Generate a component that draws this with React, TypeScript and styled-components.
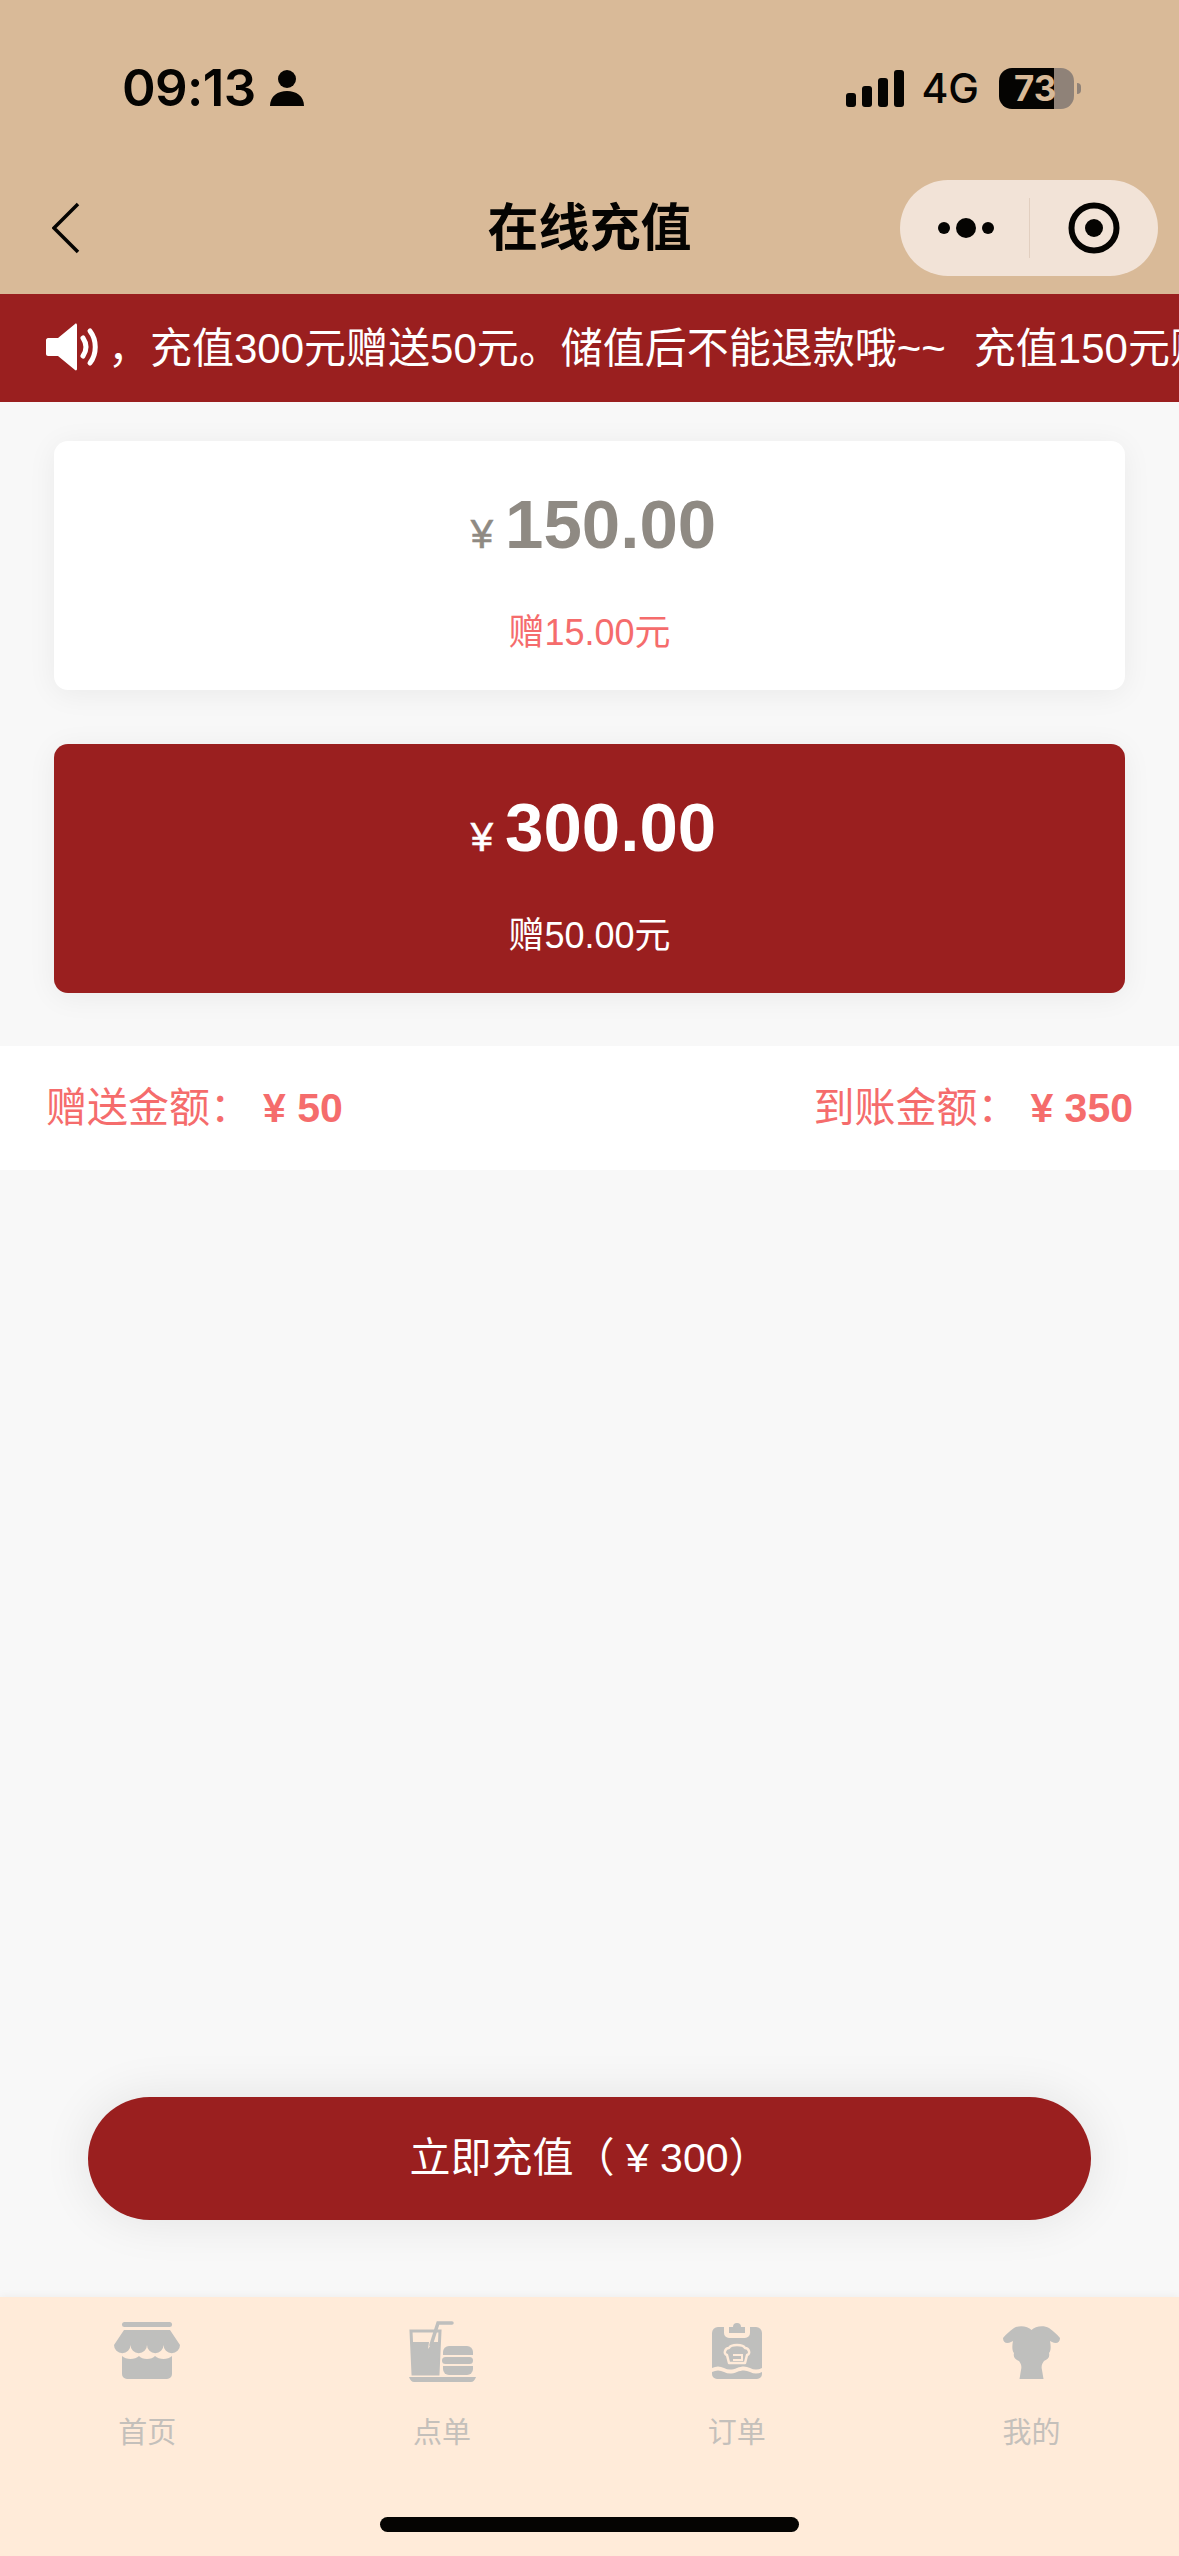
import styled, { createGlobalStyle } from "styled-components";

const GlobalStyle = createGlobalStyle`
  html, body {
    margin: 0;
    padding: 0;
    background: #f8f8f8;
    font-family: "Liberation Sans", "Noto Sans CJK SC", sans-serif;
  }
  * {
    box-sizing: border-box;
  }
`;

const Page = styled.div`
  width: 1179px;
  height: 2556px;
  display: flex;
  flex-direction: column;
  overflow: hidden;
  background: #f8f8f8;
`;

const Header = styled.header`
  background: #d9ba98;
  color: #050402;
`;

const StatusBar = styled.div`
  height: 180px;
  padding: 62px 98px 0 122px;
  display: flex;
  justify-content: space-between;
  align-items: flex-start;
`;

const StatusGroup = styled.div`
  display: flex;
  align-items: center;
  height: 52px;
`;

const Time = styled.span`
  font-family: Inter, sans-serif;
  font-size: 51px;
  font-weight: 600;
  letter-spacing: -0.6px;
  line-height: 52px;
`;

const PersonIcon = styled.svg`
  width: 34px;
  height: 36px;
  margin-left: 14px;
`;

const SignalIcon = styled.svg`
  width: 58px;
  height: 37px;
`;

const Network = styled.span`
  font-family: Inter, sans-serif;
  font-size: 41px;
  font-weight: 500;
  line-height: 52px;
  margin: 0 20px 0 17px;
`;

const BatteryWrap = styled.div`
  padding-right: 7px;
`;

const Battery = styled.div`
  position: relative;
  width: 75px;
  height: 41px;
  border-radius: 13px;
  background: linear-gradient(to right, #050402 0 55px, #8f8278 55px);
  display: flex;
  align-items: center;
  padding-left: 15px;
  font-family: Inter, sans-serif;
  font-size: 35px;
  font-weight: 700;
  color: #d9ba98;

  &::after {
    content: "";
    position: absolute;
    right: -7px;
    top: 15px;
    width: 4px;
    height: 11px;
    border-radius: 0 6px 6px 0;
    background: #8f8278;
  }
`;

const NavBar = styled.div`
  height: 114px;
  padding: 0 21px;
  display: grid;
  grid-template-columns: 1fr auto 1fr;
`;

const BackIcon = styled.svg`
  width: 28px;
  height: 52px;
  margin: 22px 0 0 31px;
`;

const Title = styled.h1`
  margin: 0;
  font-size: 51px;
  line-height: 98px;
  font-weight: 700;
`;

const Capsule = styled.div`
  justify-self: end;
  width: 258px;
  height: 96px;
  border-radius: 48px;
  background: #f2e3d7;
  display: flex;
  align-items: center;
`;

const CapsuleCell = styled.div`
  flex: 1;
  height: 60px;
  display: flex;
  align-items: center;
  justify-content: center;

  & + & {
    border-left: 1px solid #e2cfc0;
  }
`;

const Notice = styled.div`
  height: 108px;
  background: #9a1f1f;
  color: #fff;
  padding: 0 0 7px 46px;
  display: flex;
  align-items: center;
  white-space: nowrap;
  overflow: hidden;
  font-size: 42px;
`;

const SpeakerIcon = styled.svg`
  flex: none;
  width: 56px;
  height: 48px;
  margin: 5px 6px 0 0;
`;

const NoticeText = styled.span`
  flex: none;
  margin-right: 28px;
`;

const CardList = styled.div`
  padding: 39px 54px 53px;
  display: flex;
  flex-direction: column;
  gap: 54px;
`;

const Card = styled.div<{ $active?: boolean }>`
  height: 249px;
  border-radius: 14px;
  background: ${(p) => (p.$active ? "#9a1f1f" : "#fff")};
  color: ${(p) => (p.$active ? "#fff" : "#8f8a83")};
  box-shadow: 0 4px 30px rgba(0, 0, 0, 0.06);
  display: flex;
  flex-direction: column;
  align-items: center;
  padding-top: 45px;
`;

const Amount = styled.div`
  display: flex;
  align-items: baseline;
  padding-left: 8px;
  font-weight: 700;
  font-size: 69px;
  line-height: 78px;
`;

const Currency = styled.span`
  font-size: 40px;
  font-weight: 400;
  -webkit-text-stroke: 0.6px currentColor;
  margin-right: 12px;
`;

const Gift = styled.div<{ $active?: boolean }>`
  margin-top: 38px;
  font-size: 36px;
  line-height: 44px;
  color: ${(p) => (p.$active ? "#fff" : "#f56c6c")};
`;

const Summary = styled.div`
  height: 124px;
  background: #fff;
  padding: 0 46px 9px 46px;
  display: flex;
  justify-content: space-between;
  align-items: center;
  color: #f56c6c;
  font-size: 41px;
`;

const SummaryValue = styled.b`
  margin-left: 12px;
`;

const Spacer = styled.div`
  flex: 1;
`;

const PayButton = styled.button`
  display: block;
  flex: none;
  width: 1003px;
  height: 123px;
  margin: 0 88px 77px;
  padding: 0 0 10px;
  border: 0;
  border-radius: 62px;
  background: #9a1f1f;
  color: #fff;
  font-family: inherit;
  font-size: 41px;
  box-shadow: 0 0 50px rgba(0, 0, 0, 0.09);
`;

const TabBar = styled.nav`
  position: relative;
  flex: none;
  height: 259px;
  background: #ffebd9;
  box-shadow: 0 -2px 8px rgba(0, 0, 0, 0.04);
  display: grid;
  grid-template-columns: repeat(4, 1fr);
`;

const Tab = styled.div`
  display: flex;
  flex-direction: column;
  align-items: center;
  color: #c4c0bb;
  font-size: 29px;
`;

const TabIconBox = styled.div`
  height: 63px;
  margin-top: 22px;
  display: flex;
  align-items: flex-end;
`;

const TabLabel = styled.span`
  margin-top: 29px;
  line-height: 44px;
`;

const HomeBar = styled.div`
  position: absolute;
  left: 380px;
  bottom: 24px;
  width: 419px;
  height: 15px;
  border-radius: 8px;
  background: #050402;
`;

const ICON = "#bfbfbd";
const CUT = "#ffebd9";

const StoreIcon = () => (
  <svg width="66" height="57" viewBox="0 0 66 57" style={{ marginBottom: 3 }}>
    <rect x="8" y="0" width="50" height="5" rx="2.5" fill={ICON} />
    <path
      d="M10 8H56L66 23A8.25 8.25 0 0 1 49.5 23A8.25 8.25 0 0 1 33 23A8.25 8.25 0 0 1 16.5 23A8.25 8.25 0 0 1 0 23Z"
      fill={ICON}
    />
    <path
      d="M8 34C12 38 21 38 25 34C28 38 38 38 41 34C45 38 54 38 58 34V52a5 5 0 0 1-5 5H13a5 5 0 0 1-5-5Z"
      fill={ICON}
    />
  </svg>
);

const DrinkIcon = () => (
  <svg width="67" height="63" viewBox="0 0 67 63">
    <path d="M2 12H31L29 55H4Z" fill="none" stroke={ICON} strokeWidth="3" />
    <path d="M3 23H20L19 30L24 23H31L29 55H4Z" fill={ICON} />
    <path d="M22 26L29 4H43" fill="none" stroke={ICON} strokeWidth="3.5" strokeLinecap="round" />
    <path d="M34 36v-3a6 6 0 0 1 6-6h18a6 6 0 0 1 6 6v3Z" fill={ICON} />
    <rect x="33" y="38" width="31" height="7" rx="3.5" fill={ICON} />
    <path d="M34 47H64v3a6 6 0 0 1-6 6H40a6 6 0 0 1-6-6Z" fill={ICON} />
    <path d="M0 58H67C66 61 64 63 62 63H5C3 63 1 61 0 58Z" fill={ICON} />
  </svg>
);

const OrderIcon = () => (
  <svg width="50" height="57" viewBox="0 0 50 57" style={{ marginBottom: 3 }}>
    <path
      d="M12 5H6a6 6 0 0 0-6 6V46C4 44 8 44 12 46C16 48 20 48 25 46C30 44 34 44 38 46C42 48 46 48 50 46V11a6 6 0 0 0-6-6H38V11a5 5 0 0 1-5 5H17a5 5 0 0 1-5-5Z"
      fill={ICON}
    />
    <path d="M17 11V5h4a4 4 0 0 1 8 0h4v6Z" fill={ICON} />
    <path d="M0 50C4 48 8 48 12 50C16 52 20 52 25 50C30 48 34 48 38 50C42 52 46 52 50 50V52a5 5 0 0 1-5 5H5a5 5 0 0 1-5-5Z" fill={ICON} />
    <path
      d="M17 41L15 33C11 32 13 26 17 26C19 22 31 22 33 26C37 26 39 32 35 33L33 41Z"
      fill="none"
      stroke={CUT}
      strokeWidth="2.5"
      strokeLinejoin="round"
    />
    <path d="M21 33H30V38H21" fill="none" stroke={CUT} strokeWidth="2" />
  </svg>
);

const DogIcon = () => (
  <svg width="57" height="53" viewBox="0 0 57 53" style={{ marginBottom: 3 }}>
    <path
      d="M28.5 4C25 0 16-1 11 2C7 5 3 8 0 12C0 17 4 18 8 16L10 15C9 20 9 25 11 27C10 31 12 33 16 35C18 38 19 40 18 44L16.5 53H40.5L39 44C38 40 39 38 41 35C45 33 47 31 46 27C48 25 48 20 47 15L49 16C53 18 57 17 57 12C54 8 50 5 46 2C41-1 32 0 28.5 4Z"
      fill={ICON}
    />
  </svg>
);

const tabs = [
  { label: "首页", icon: <StoreIcon /> },
  { label: "点单", icon: <DrinkIcon /> },
  { label: "订单", icon: <OrderIcon /> },
  { label: "我的", icon: <DogIcon /> },
];

const App = () => {
  return (
    <Page>
      <GlobalStyle />
      <Header>
        <StatusBar>
          <StatusGroup>
            <Time>09:13</Time>
            <PersonIcon viewBox="0 0 34 36">
              <circle cx="17" cy="9" r="9" fill="currentColor" />
              <path d="M0 36C0 26 8 21 17 21S34 26 34 36Z" fill="currentColor" />
            </PersonIcon>
          </StatusGroup>
          <StatusGroup>
            <SignalIcon viewBox="0 0 58 37">
              <rect x="0" y="23" width="10" height="14" rx="3" fill="currentColor" />
              <rect x="16" y="16" width="10" height="21" rx="3" fill="currentColor" />
              <rect x="32" y="8" width="10" height="29" rx="3" fill="currentColor" />
              <rect x="48" y="0" width="10" height="37" rx="3" fill="currentColor" />
            </SignalIcon>
            <Network>4G</Network>
            <BatteryWrap>
              <Battery>73</Battery>
            </BatteryWrap>
          </StatusGroup>
        </StatusBar>
        <NavBar>
          <BackIcon viewBox="0 0 28 52">
            <path d="M26 2L2 26L26 50" fill="none" stroke="currentColor" strokeWidth="3.5" />
          </BackIcon>
          <Title>在线充值</Title>
          <Capsule>
            <CapsuleCell>
              <svg width="56" height="20" viewBox="0 0 56 20" style={{ marginLeft: 3 }}>
                <circle cx="6" cy="10" r="6" fill="currentColor" />
                <circle cx="28" cy="10" r="10" fill="currentColor" />
                <circle cx="50" cy="10" r="6" fill="currentColor" />
              </svg>
            </CapsuleCell>
            <CapsuleCell>
              <svg width="52" height="52" viewBox="0 0 52 52">
                <circle cx="26" cy="26" r="22.5" fill="none" stroke="currentColor" strokeWidth="6" />
                <circle cx="26" cy="26" r="9" fill="currentColor" />
              </svg>
            </CapsuleCell>
          </Capsule>
        </NavBar>
      </Header>

      <Notice>
        <SpeakerIcon viewBox="0 0 56 48">
          <path d="M2 15H12L29 1C30 0 31 1 31 2V46C31 47 30 48 29 47L12 33H2C1 33 0 32 0 31V17C0 16 1 15 2 15Z" fill="#fff" />
          <path d="M37 15C41 21 41 27 37 33" fill="none" stroke="#fff" strokeWidth="5" strokeLinecap="round" />
          <path d="M44 8C51 17 51 31 44 40" fill="none" stroke="#fff" strokeWidth="5" strokeLinecap="round" />
        </SpeakerIcon>
        <NoticeText>，充值300元赠送50元。储值后不能退款哦~~</NoticeText>
        <NoticeText>充值150元赠送15元</NoticeText>
      </Notice>

      <CardList>
        <Card>
          <Amount>
            <Currency>¥</Currency>150.00
          </Amount>
          <Gift>赠15.00元</Gift>
        </Card>
        <Card $active>
          <Amount>
            <Currency>¥</Currency>300.00
          </Amount>
          <Gift $active>赠50.00元</Gift>
        </Card>
      </CardList>

      <Summary>
        <span>
          赠送金额：<SummaryValue>¥ 50</SummaryValue>
        </span>
        <span>
          到账金额：<SummaryValue>¥ 350</SummaryValue>
        </span>
      </Summary>

      <Spacer />

      <PayButton>立即充值（ ¥ 300）</PayButton>

      <TabBar>
        {tabs.map((tab) => (
          <Tab key={tab.label}>
            <TabIconBox>{tab.icon}</TabIconBox>
            <TabLabel>{tab.label}</TabLabel>
          </Tab>
        ))}
        <HomeBar />
      </TabBar>
    </Page>
  );
};

export default App;
